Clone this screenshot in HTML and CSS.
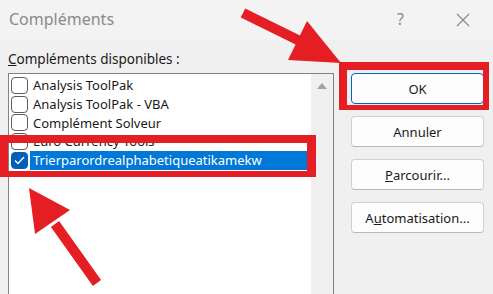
FILE: index.html
```html
<!DOCTYPE html>
<html>
    <head>
        <meta charset="utf-8">
        <title>Compléments</title>
        <link rel="stylesheet" href="styles.css">
    </head>
    <body>
        <div class="dialog">
            <div class="titlebar">
                <span class="title">Compléments</span>
                <span class="help">?</span>
                <span class="close">
                    <svg width="14" height="14" viewBox="0 0 14 14">
                        <path d="M1 1 L13 13 M13 1 L1 13" stroke="#8a8a8a" stroke-width="1.2" fill="none"/>
                    </svg>
                </span>
            </div>
            <div class="content">
                <div class="addins">
                    <div class="list_label"><u>C</u>ompléments disponibles :</div>
                    <div class="listbox">
                        <ul class="items">
                            <li class="item"><span class="check"></span><span class="name">Analysis ToolPak</span></li>
                            <li class="item"><span class="check"></span><span class="name">Analysis ToolPak - VBA</span></li>
                            <li class="item"><span class="check"></span><span class="name">Complément Solveur</span></li>
                            <li class="item"><span class="check"></span><span class="name">Euro Currency Tools</span></li>
                            <li class="item selected">
                                <span class="check checked">
                                    <svg width="11" height="9" viewBox="0 0 11 9">
                                        <path d="M1 4.5 L4 7.5 L10 1" stroke="#ffffff" stroke-width="1.3" fill="none"/>
                                    </svg>
                                </span>
                                <span class="name">Trierparordrealphabetiqueatikamekw</span>
                            </li>
                        </ul>
                        <div class="scrollbar"><span class="scroll_up"></span></div>
                    </div>
                </div>
                <div class="buttons">
                    <div class="btn default">OK</div>
                    <div class="btn">Annuler</div>
                    <div class="btn"><u>P</u>arcourir...</div>
                    <div class="btn">A<u>u</u>tomatisation...</div>
                </div>
            </div>
            <!-- red annotations drawn over the dialog -->
            <svg class="annotations" width="493" height="294" viewBox="0 0 493 294">
                <g fill="#e41e23">
                    <line x1="243" y1="13" x2="306" y2="44" stroke="#e41e23" stroke-width="10"/>
                    <polygon points="307,21 288,60 341,63"/>
                    <line x1="97" y1="283" x2="55" y2="224" stroke="#e41e23" stroke-width="10"/>
                    <polygon points="29,188 70,210 35,234"/>
                    <path fill-rule="evenodd" d="M0 135 H316 V177 H0 Z M8 143 V171 H307 V143 Z"/>
                    <path fill-rule="evenodd" d="M339 62 H489 V110 H339 Z M347 70 V105 H483 V70 Z"/>
                </g>
            </svg>
        </div>
    </body>
</html>
```

FILE: styles.css
```css
body {
    margin: 0;
    font-family: "Noto Sans", "DejaVu Sans", sans-serif;
    color: #1a1a1a;
}
.dialog {
    position: relative;
    width: 493px;
    height: 294px;
    overflow: hidden;
    background: #f0f0f0;
}
.titlebar {
    display: flex;
    align-items: center;
    height: 40px;
    background: #f3f3f3;
    padding: 0 23px 0 9px;
    box-sizing: border-box;
}
.title {
    font-size: 16px;
    color: #8a8a8a;
    padding-bottom: 2px;
}
.help {
    margin-left: auto;
    font-size: 16px;
    color: #8a8a8a;
    padding-bottom: 2px;
}
.close {
    display: flex;
    margin-left: 52px;
}

.content {
    display: flex;
    padding-left: 8px;
}
.addins {
    width: 326px;
}
.list_label {
    height: 33px;
    padding-top: 9px;
    box-sizing: border-box;
    font-size: 13.5px;
    line-height: 20px;
}
.listbox {
    display: flex;
    height: 240px;
    border: 1px solid #828282;
    background: #ffffff;
}
.items {
    flex: 1;
    list-style: none;
    margin: 0;
    padding: 2px 4px 0 2px;
}
.item {
    display: flex;
    align-items: center;
    height: 18.75px;
    font-size: 13px;
}
.check {
    display: flex;
    align-items: center;
    justify-content: center;
    width: 17px;
    height: 17px;
    box-sizing: border-box;
    border: 1px solid #5c5c5c;
    border-radius: 4px;
    background: #ffffff;
}
.check.checked {
    border-color: #005fb8;
    background: #005fb8;
}
.name {
    padding: 0 3px;
    margin-left: 2px;
    line-height: 18.75px;
    white-space: nowrap;
}
.selected .name {
    flex: 1;
    background: #0078d7;
    color: #ffffff;
}
.scrollbar {
    width: 22px;
    background: #f0f0f0;
    display: flex;
    justify-content: center;
    padding-top: 9px;
    box-sizing: border-box;
}
.scroll_up {
    width: 0;
    height: 0;
    border-left: 5px solid transparent;
    border-right: 5px solid transparent;
    border-bottom: 6px solid #a3a3a3;
}

.buttons {
    display: flex;
    flex-direction: column;
    gap: 12px;
    width: 133px;
    margin-left: 17px;
    padding-top: 33px;
}
.btn {
    display: flex;
    align-items: center;
    justify-content: center;
    height: 31px;
    box-sizing: border-box;
    background: #fdfdfd;
    border: 1px solid #d0d0d0;
    border-bottom-color: #b8b8b8;
    border-radius: 4px;
    font-size: 13px;
}
.btn.default {
    border: 1px solid #0067c0;
}

.annotations {
    position: absolute;
    top: 0;
    left: 0;
    pointer-events: none;
}
```
